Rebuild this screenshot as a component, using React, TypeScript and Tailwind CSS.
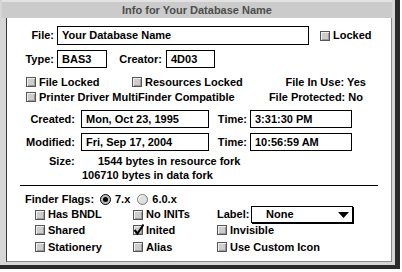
import React from "react";

const Box = ({ checked = false }: { checked?: boolean }) => (
  <span className="relative w-[10px] h-[10px] shrink-0 border border-[#555] bg-[#cdcdcd] shadow-[inset_1px_1px_0_#efefef,inset_-1px_-1px_0_#9a9a9a]">
    {checked && (
      <svg className="absolute left-[-1px] top-[-3px]" width="12" height="13" viewBox="0 0 12 13">
        <path d="M1.5 7 L4.5 10.5 L10.5 1.5" fill="none" stroke="#000" strokeWidth="2" />
      </svg>
    )}
  </span>
);

const Check = ({ label, checked = false, w }: { label: string; checked?: boolean; w?: string }) => (
  <div className={`flex items-center gap-[3px] ${w ?? ""}`}>
    <Box checked={checked} />
    <span className="leading-none">{label}</span>
  </div>
);

const Radio = ({ on }: { on: boolean }) => (
  <span
    className={`relative w-[11px] h-[11px] shrink-0 rounded-full border flex items-center justify-center ${
      on ? "border-black bg-[#bdbdbd]" : "border-[#777] bg-[#dedede] shadow-[inset_1px_1px_0_#fff]"
    }`}
  >
    {on && <span className="w-[5px] h-[5px] rounded-full bg-black" />}
  </span>
);

const Field = ({ text, w, h = "h-[18px]" }: { text: string; w: string; h?: string }) => (
  <div className={`${w} ${h} border border-black bg-white flex items-center pl-[4px] shrink-0`}>
    <span className="leading-none whitespace-nowrap">{text}</span>
  </div>
);

export default function App() {
  return (
    <div className="w-[402px] h-[272px] bg-white font-['Liberation_Sans',Arial,sans-serif] text-[11px] font-bold text-black">
      <div className="w-[400px] h-[269px] bg-[#2a2a2a]">
        <div className="w-[395px] h-[265px] bg-[#d6d6d6] flex flex-col pl-[6px] pr-[3px] pb-[3px]">
          <div className="h-[18px] shrink-0 bg-[#cbcbcb] -ml-[4px] border-t-2 border-[#e2e2e2] flex items-center justify-center text-[#4d4d4d]">
            Info for Your Database Name
          </div>
          <div className="flex-1 bg-white border-l border-l-[#3a3a3a] border-r border-r-[#8a8a8a] border-b border-b-[#8a8a8a] flex flex-col">
            {/* File row */}
            <div className="flex items-center h-[19px] mt-[8px]">
              <span className="w-[47px] text-right">File:</span>
              <div className="ml-[3px]">
                <Field text="Your Database Name" w="w-[252px]" h="h-[19px]" />
              </div>
              <div className="ml-[11px]">
                <Check label="Locked" />
              </div>
            </div>
            {/* Type row */}
            <div className="flex items-center h-[18px] mt-[5px]">
              <span className="w-[47px] text-right">Type:</span>
              <div className="ml-[3px]">
                <Field text="BAS3" w="w-[50px]" />
              </div>
              <span className="w-[55px] text-right">Creator:</span>
              <div className="ml-[4px]">
                <Field text="4D03" w="w-[49px]" />
              </div>
            </div>
            {/* Checkbox rows */}
            <div className="flex items-center h-[14px] mt-[7px] pl-[19px]">
              <Check label="File Locked" w="w-[106px]" />
              <Check label="Resources Locked" />
              <span className="flex-1 text-right pr-[25px]">File In Use: Yes</span>
            </div>
            <div className="flex items-center h-[14px] mt-[1px] pl-[19px]">
              <Check label="Printer Driver MultiFinder Compatible" />
              <span className="flex-1 text-right pr-[28px]">File Protected: No</span>
            </div>
            {/* Created */}
            <div className="flex items-center h-[18px] mt-[6px]">
              <span className="w-[68px] text-right">Created:</span>
              <div className="ml-[6px]">
                <Field text="Mon, Oct 23, 1995" w="w-[128px]" />
              </div>
              <span className="w-[38px] text-right">Time:</span>
              <div className="ml-[3px]">
                <Field text="3:31:30 PM" w="w-[102px]" />
              </div>
            </div>
            {/* Modified */}
            <div className="flex items-center h-[18px] mt-[5px]">
              <span className="w-[68px] text-right">Modified:</span>
              <div className="ml-[6px]">
                <Field text="Fri, Sep 17, 2004" w="w-[128px]" />
              </div>
              <span className="w-[38px] text-right">Time:</span>
              <div className="ml-[3px]">
                <Field text="10:56:59 AM" w="w-[102px]" />
              </div>
            </div>
            {/* Size */}
            <div className="flex items-center h-[14px] mt-[3px] pl-[42px]">
              <span className="w-[49px]">Size:</span>
              <span>1544 bytes in resource fork</span>
            </div>
            <div className="flex items-center h-[14px] pl-[75px]">
              <span>106710 bytes in data fork</span>
            </div>
            <div className="h-px w-[358px] ml-[13px] mt-[3px] bg-black" />
            {/* Finder flags */}
            <div className="flex items-center h-[14px] mt-[6px] pl-[18px]">
              <span className="w-[75px]">Finder Flags:</span>
              <Radio on />
              <span className="ml-[4px]">7.x</span>
              <span className="ml-[7px]">
                <Radio on={false} />
              </span>
              <span className="ml-[4px]">6.0.x</span>
            </div>
            <div className="flex items-center h-[17px] pl-[28px]">
              <Check label="Has BNDL" w="w-[98px]" />
              <Check label="No INITs" w="w-[84px]" />
              <span className="w-[34px]">Label:</span>
              <div className="w-[102px] h-[17px] border border-black shadow-[1px_1px_0_#000] bg-white flex items-center justify-between pl-[14px] pr-[3px]">
                <span className="leading-none">None</span>
                <svg width="11" height="6" viewBox="0 0 11 6">
                  <path d="M0 0 H11 L5.5 6 Z" fill="#000" />
                </svg>
              </div>
            </div>
            <div className="flex items-center h-[14px] pl-[28px]">
              <Check label="Shared" w="w-[98px]" />
              <Check label="Inited" checked w="w-[84px]" />
              <Check label="Invisible" />
            </div>
            <div className="flex items-center h-[14px] mt-[3px] pl-[28px]">
              <Check label="Stationery" w="w-[98px]" />
              <Check label="Alias" w="w-[84px]" />
              <Check label="Use Custom Icon" />
            </div>
          </div>
        </div>
      </div>
    </div>
  );
}
